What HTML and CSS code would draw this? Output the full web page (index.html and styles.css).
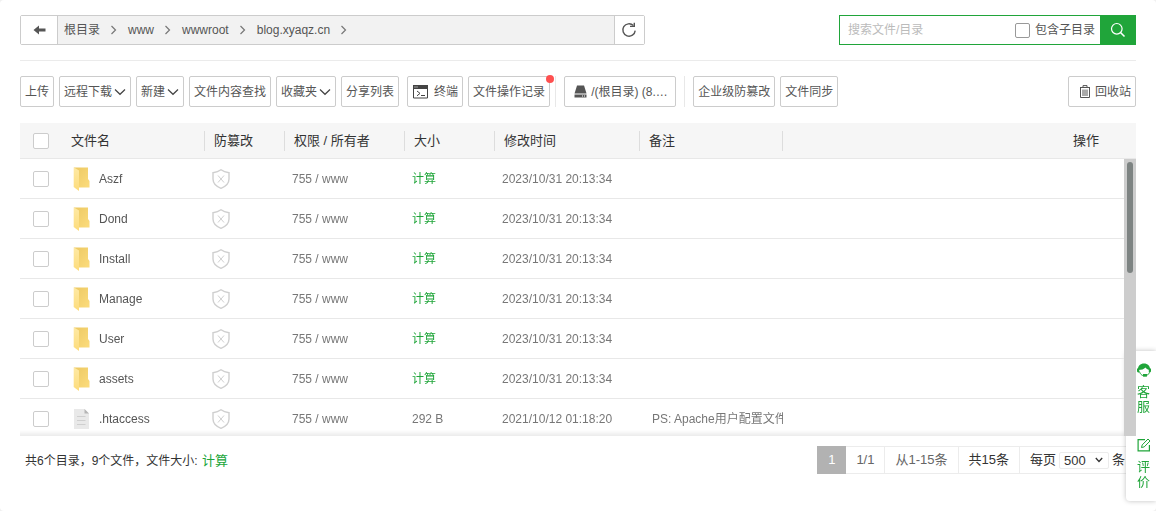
FILE: index.html
```html
<!DOCTYPE html>
<html lang="zh-CN">
<head>
<meta charset="utf-8">
<title>文件</title>
<link rel="stylesheet" href="styles.css">
</head>
<body>
<svg class="sprite" aria-hidden="true">
  <defs>
    <linearGradient id="folder-back" x1="0" y1="0" x2="1" y2="1"><stop offset="0" stop-color="#ecc862"/><stop offset="1" stop-color="#fcdc7c"/></linearGradient>
    <linearGradient id="folder-front" x1="0" y1="0" x2="0" y2="1"><stop offset="0" stop-color="#fee9a4"/><stop offset="1" stop-color="#fddc7c"/></linearGradient>
  </defs>
  <symbol id="chevron-right" viewBox="0 0 8 10"><path d="M1.5 1 L5.5 5 L1.5 9" fill="none" stroke="#777" stroke-width="1.2"/></symbol>
  <symbol id="chevron-down" viewBox="0 0 12 8"><path d="M1 1.5 L6 6.3 L11 1.5" fill="none" stroke="#444" stroke-width="1.2"/></symbol>
  <symbol id="folder" viewBox="0 0 18 26"><path d="M1.5 1.5 H15.500 V13 L17 15 V21.500 H6 Z" fill="url(#folder-back)"/><path d="M1.2 1.2 L6.5 4.5 V25 L1.2 21 Z" fill="url(#folder-front)"/></symbol>
  <symbol id="doc" viewBox="0 0 18 26"><path d="M1.5 3 H12 L16.5 7.5 V23 H1.5 Z" fill="#e9e9e9"/><path d="M12 3 L16.5 7.5 H12 Z" fill="#b5b5b5"/><path d="M4.500 10.500 H13 M4.500 14.500 H13 M4.500 18.500 H13" stroke="#cfcfcf" fill="none"/></symbol>
  <symbol id="shield" viewBox="0 0 18 20"><path d="M9 .8 C11.500 2.600 14 3.300 17 3.700 V10 C17 14.500 13.500 17.500 9 19.300 C4.500 17.500 1 14.500 1 10 V3.700 C4 3.300 6.500 2.600 9 .8 Z" fill="none" stroke="#cfcfcf" stroke-width="1.4"/><path d="M6 6.500 L12 13.500 M12 6.500 L6 13.500" stroke="#cfcfcf" fill="none"/></symbol>
</svg>
<main class="panel">
  <header class="topbar">
    <nav class="path" aria-label="路径">
      <button class="path-back" aria-label="返回"><svg width="13" height="10" viewBox="0 0 13 10"><path d="M0.500 5 L6 .4 V3.400 H12.500 V6.600 H6 V9.600 Z" fill="#555"/></svg></button>
      <div class="crumbs">
        <a href="#">根目录</a><svg class="sep"><use href="#chevron-right"/></svg>
        <a href="#">www</a><svg class="sep"><use href="#chevron-right"/></svg>
        <a href="#">wwwroot</a><svg class="sep"><use href="#chevron-right"/></svg>
        <a href="#">blog.xyaqz.cn</a><svg class="sep"><use href="#chevron-right"/></svg>
      </div>
      <button class="path-refresh" aria-label="刷新"><svg width="16" height="16" viewBox="0 0 16 16"><path d="M12.400 3.600 A6.200 6.200 0 1 0 14.200 8.600" fill="none" stroke="#555" stroke-width="1.400"/><path d="M9 4.400 H13.300 V.8" fill="none" stroke="#555" stroke-width="1.400"/></svg></button>
    </nav>
    <form class="search">
      <input class="search-text" type="text" placeholder="搜索文件/目录" aria-label="搜索文件/目录">
      <label class="search-sub"><input class="check check-dark" type="checkbox">包含子目录</label>
      <button class="search-go" type="button" aria-label="搜索"><svg width="16" height="16" viewBox="0 0 16 16"><circle cx="6.800" cy="6.800" r="5.300" fill="none" stroke="#fff" stroke-width="1.200"/><path d="M10.500 10.500 L14.500 14.500" stroke="#fff" stroke-width="1.600"/></svg></button>
    </form>
  </header>

  <div class="toolbar">
    <button class="btn">上传</button>
    <button class="btn">远程下载<svg class="arrow"><use href="#chevron-down"/></svg></button>
    <button class="btn">新建<svg class="arrow"><use href="#chevron-down"/></svg></button>
    <button class="btn">文件内容查找</button>
    <button class="btn">收藏夹<svg class="arrow"><use href="#chevron-down"/></svg></button>
    <button class="btn">分享列表</button>
    <button class="btn btn-term"><svg width="16" height="14" viewBox="0 0 16 14"><path d="M.5 .5 H14.500 V13 H.5 Z" fill="none" stroke="#444"/><path d="M0 0 H15 V4 H0 Z" fill="#444"/><path d="M1.500 2 H2.500 M3.500 2 H4.500" stroke="#fff"/><path d="M4 6 L7 8.400 L4 10.800 M8 10.500 H12" fill="none" stroke="#444"/></svg>终端</button>
    <button class="btn btn-log">文件操作记录<span class="dot"></span></button>
    <span class="divider"></span>
    <button class="btn btn-disk"><svg width="13" height="13" viewBox="0 0 13 13"><path d="M3 .5 H10 L12.500 8.500 H.5 Z" fill="#555"/><path d="M.5 9.500 H12.500 V12.500 H.5 Z" fill="#555"/><path d="M8 11 H9 M10 11 H11" stroke="#fff"/></svg>/(根目录) (8.…</button>
    <span class="divider"></span>
    <button class="btn">企业级防篡改</button>
    <button class="btn">文件同步</button>
    <button class="btn btn-trash"><svg width="12" height="13" viewBox="0 0 12 13"><path d="M1 2.500 H11 M4 2.500 V.6 H8 V2.500 M1.500 2.500 V12.500 H10.500 V2.500 M4 4.500 V11 M8 4.500 V11 M6 4.500 V11" fill="none" stroke="#555"/></svg>回收站</button>
  </div>

  <section class="files">
    <table class="grid grid-head">
      <colgroup><col class="c-check"><col class="c-name"><col class="c-guard"><col class="c-perm"><col class="c-size"><col class="c-time"><col class="c-note"><col></colgroup>
      <thead><tr>
        <th><input class="check" type="checkbox" aria-label="全选"></th>
        <th class="ruled">文件名</th><th class="ruled">防篡改</th><th class="ruled">权限 / 所有者</th><th class="ruled">大小</th><th class="ruled">修改时间</th><th class="ruled">备注</th><th class="ops">操作</th>
      </tr></thead>
    </table>
    <div class="viewport">
      <table class="grid grid-body">
        <colgroup><col class="c-check"><col class="c-name"><col class="c-guard"><col class="c-perm"><col class="c-size"><col class="c-time"><col class="c-note"><col></colgroup>
        <tbody>
          <tr><td><input class="check" type="checkbox" aria-label="Aszf"></td><td><span class="file"><svg class="ficon"><use href="#folder"/></svg>Aszf</span></td><td><svg class="shield"><use href="#shield"/></svg></td><td>755 / www</td><td><a class="calc" href="#">计算</a></td><td>2023/10/31 20:13:34</td><td></td><td></td></tr>
          <tr><td><input class="check" type="checkbox" aria-label="Dond"></td><td><span class="file"><svg class="ficon"><use href="#folder"/></svg>Dond</span></td><td><svg class="shield"><use href="#shield"/></svg></td><td>755 / www</td><td><a class="calc" href="#">计算</a></td><td>2023/10/31 20:13:34</td><td></td><td></td></tr>
          <tr><td><input class="check" type="checkbox" aria-label="Install"></td><td><span class="file"><svg class="ficon"><use href="#folder"/></svg>Install</span></td><td><svg class="shield"><use href="#shield"/></svg></td><td>755 / www</td><td><a class="calc" href="#">计算</a></td><td>2023/10/31 20:13:34</td><td></td><td></td></tr>
          <tr><td><input class="check" type="checkbox" aria-label="Manage"></td><td><span class="file"><svg class="ficon"><use href="#folder"/></svg>Manage</span></td><td><svg class="shield"><use href="#shield"/></svg></td><td>755 / www</td><td><a class="calc" href="#">计算</a></td><td>2023/10/31 20:13:34</td><td></td><td></td></tr>
          <tr><td><input class="check" type="checkbox" aria-label="User"></td><td><span class="file"><svg class="ficon"><use href="#folder"/></svg>User</span></td><td><svg class="shield"><use href="#shield"/></svg></td><td>755 / www</td><td><a class="calc" href="#">计算</a></td><td>2023/10/31 20:13:34</td><td></td><td></td></tr>
          <tr><td><input class="check" type="checkbox" aria-label="assets"></td><td><span class="file"><svg class="ficon"><use href="#folder"/></svg>assets</span></td><td><svg class="shield"><use href="#shield"/></svg></td><td>755 / www</td><td><a class="calc" href="#">计算</a></td><td>2023/10/31 20:13:34</td><td></td><td></td></tr>
          <tr><td><input class="check" type="checkbox" aria-label=".htaccess"></td><td><span class="file"><svg class="ficon"><use href="#doc"/></svg>.htaccess</span></td><td><svg class="shield"><use href="#shield"/></svg></td><td>755 / www</td><td>292 B</td><td>2021/10/12 01:18:20</td><td class="note">PS: Apache用户配置文件</td><td></td></tr>
        </tbody>
      </table>
      <div class="track"><div class="thumb"></div></div>
      <div class="fade"></div>
    </div>
  </section>

  <footer class="footer">
    <div class="summary">共6个目录，9个文件，文件大小: <a class="calc" href="#">计算</a></div>
    <div class="pager">
      <span class="page current">1</span><span class="page muted">1/1</span><span class="page muted">从1-15条</span><span class="page">共15条</span>
      <label class="page per">每页<span class="pick"><select><option>500</option></select><svg width="8" height="6" viewBox="0 0 8 6"><path d="M.8 1 L4 4.500 L7.200 1" fill="none" stroke="#333" stroke-width="1.300"/></svg></span>条</label>
    </div>
  </footer>
</main>

<aside class="side">
  <a href="#"><svg width="14" height="14" viewBox="0 0 14 14"><path d="M1 7 C.4 3 3.500 .4 7 .4 C10.500 .4 13.600 3 13 7 C11 6.800 9.500 6 8.500 4.500 C7 6.200 4.500 7 1 7 Z" fill="#20a53a"/><path d="M0 5.500 H2.200 V9.500 H1 L0 8.500 Z M11.800 5.500 H14 V8.500 L13 9.500 H11.800 Z" fill="#20a53a"/><path d="M2.500 8.500 C3.500 12 5.500 12.800 8 12.800 C10 12.800 11.500 11.500 12.500 9.500" fill="none" stroke="#20a53a"/><path d="M6 11 H10 V13.600 H6 Z" fill="#20a53a"/></svg><span>客服</span></a>
  <a href="#"><svg width="14" height="14" viewBox="0 0 14 14"><path d="M8 1.600 H1.100 V12.900 H12.400 V7" fill="none" stroke="#20a53a" stroke-width="1.200"/><path d="M4.500 9.500 L5.200 6.900 L11 1 L13 3 L7.200 8.900 Z" fill="none" stroke="#20a53a"/></svg><span>评价</span></a>
</aside>
</body>
</html>
```
FILE: styles.css
```css
* { box-sizing: border-box; }

body {
  margin: 0;
  background: #f0f0f0;
  color: #555;
  font: 12px/20px "Liberation Sans", "Noto Sans CJK SC", sans-serif;
}

a { color: inherit; text-decoration: none; }
button, input, select { font: inherit; color: inherit; margin: 0; }
button { cursor: pointer; padding: 0; }
svg { flex: none; }
.sprite { position: absolute; width: 0; height: 0; }

.panel {
  min-height: 100vh;
  padding: 15px 20px 0;
  background: #fff;
  border-radius: 4px;
}

.check {
  appearance: none;
  display: block;
  width: 16px;
  height: 16px;
  background: #fff;
  border: 1px solid #ccc;
  border-radius: 2px;
}
.check-dark { width: 15px; height: 15px; border-color: #999; }

/* path and search */
.topbar {
  display: flex;
  justify-content: space-between;
  padding-bottom: 15px;
  border-bottom: 1px solid #ebebeb;
}
.path {
  display: flex;
  width: 56%;
  height: 30px;
  border: 1px solid #ccc;
  border-radius: 2px;
}
.path-back, .path-refresh {
  display: flex;
  align-items: center;
  justify-content: center;
  background: #fff;
  border: 0;
}
.path-back { width: 37px; border-right: 1px solid #ccc; }
.path-refresh { width: 30px; border-left: 1px solid #ccc; }
.crumbs {
  display: flex;
  flex: 1;
  align-items: center;
  gap: 10px;
  padding-left: 6px;
  background: #f2f2f2;
}
.sep { width: 8px; height: 10px; }

.search {
  display: flex;
  align-items: center;
  width: 297px;
  height: 30px;
  border: 1px solid #20a53a;
}
.search-text {
  flex: 1;
  min-width: 0;
  padding: 0 8px;
  border: 0;
  background: none;
  outline: 0;
}
.search-text::placeholder { color: #bbb; }
.search-sub { display: flex; align-items: center; gap: 5px; padding-right: 5px; }
.search-go {
  display: flex;
  align-items: center;
  justify-content: center;
  align-self: stretch;
  width: 35px;
  background: #20a53a;
  border: 0;
}

/* toolbar */
.toolbar { display: flex; gap: 5px; padding: 15px 0 16px; }
.btn {
  display: flex;
  align-items: center;
  height: 31px;
  padding: 0 4px;
  background: #fff;
  border: 1px solid #ccc;
  border-radius: 2px;
  white-space: nowrap;
}
.arrow { width: 12px; height: 8px; margin-left: 2px; }
.btn-term { gap: 5px; margin-left: 3px; padding: 0 4px 0 5px; }
.btn-log { position: relative; }
.dot {
  position: absolute;
  top: -2px;
  right: -5px;
  width: 8px;
  height: 8px;
  border-radius: 50%;
  background: #fe5050;
}
.divider { width: 1px; margin-right: 3px; background: #e8e8e8; }
.btn-disk { gap: 4px; width: 112px; padding-left: 9px; margin-right: 3px; }
.btn-trash { gap: 4px; margin-left: auto; padding-left: 10px; }

/* file list */
.grid { width: 100%; table-layout: fixed; border-collapse: separate; border-spacing: 0; }
.grid th, .grid td { overflow: hidden; white-space: nowrap; text-align: left; }
.c-check { width: 41px; }
.c-name { width: 144px; }
.c-guard { width: 80px; }
.c-perm { width: 120px; }
.c-size { width: 90px; }
.c-time { width: 145px; }
.c-note { width: 143px; }

.grid-head { background: #f6f6f6; color: #333; font-size: 13px; }
.grid th { height: 36px; padding: 0 9px; font-weight: normal; border-bottom: 1px solid #e8e8e8; }
.grid th:nth-child(2) { padding-left: 10px; }
.grid th.ruled {
  background: linear-gradient(#ddd, #ddd) right center / 1px 20px no-repeat;
}
.grid .ops { padding-right: 37px; text-align: right; }
.grid th:first-child, .grid td:first-child { padding: 0 0 0 13px; }

.viewport { position: relative; height: calc(100vh - 234px); padding-right: 12px; overflow: hidden; z-index: 2; }
.grid td { height: 40px; padding: 0 7px; border-bottom: 1px solid #e8e8e8; color: #777; }
.grid td.note { padding: 0 0 0 12px; }
.grid td:nth-child(2) { padding-left: 11px; color: #555; }
.file { display: flex; align-items: center; gap: 8px; }
.ficon { width: 19px; height: 26px; }
.shield { display: block; width: 18px; height: 20px; }
.calc { color: #20a53a; }

.track {
  position: absolute;
  inset: 0 0 0 auto;
  width: 12px;
  padding: 3px;
  background: #cdcdcd;
}
.thumb { height: 41%; border-radius: 3px; background: #7d8382; }
.fade {
  position: absolute;
  inset: auto 12px 0 0;
  height: 6px;
  background: linear-gradient(rgba(0, 0, 0, 0), rgba(0, 0, 0, .08));
}

/* footer */
.footer { display: flex; justify-content: space-between; padding-top: 10px; color: #333; }
.summary { padding: 5px 5px 0; }
.summary .calc { margin-left: 1px; font-size: 13px; }
.pager { display: flex; height: 28px; font-size: 13px; border: 1px solid #ececec; border-left: 0; }
.page { display: flex; align-items: center; padding: 0 10px; border-right: 1px solid #ececec; }
.page:last-child { border-right: 0; }
.muted { color: #666; }
.current { margin: -1px 0; padding: 0 11px; color: #fff; background: #b2b2b2; border: 0; }
.per { gap: 3px; }
.pick { position: relative; display: flex; align-items: center; }
.pick select {
  appearance: none;
  width: 50px;
  height: 17px;
  padding: 0 4px;
  line-height: 15px;
  background: #fff;
  border: 1px solid #ececec;
  border-radius: 2px;
}
.pick svg { position: absolute; right: 6px; pointer-events: none; }

/* floating help */
.side {
  position: fixed;
  right: 0;
  bottom: 10px;
  z-index: 1;
  display: flex;
  flex-direction: column;
  gap: 24px;
  width: 30px;
  padding: 12px 0 12px 11px;
  color: #20a53a;
  background: #fff;
  border-radius: 4px 0 0 4px;
  box-shadow: 0 0 5px rgba(0, 0, 0, .25);
  font-size: 13px;
  line-height: 15px;
}
.side a { display: flex; flex-direction: column; gap: 7px; }
.side span { width: 13px; }
```
